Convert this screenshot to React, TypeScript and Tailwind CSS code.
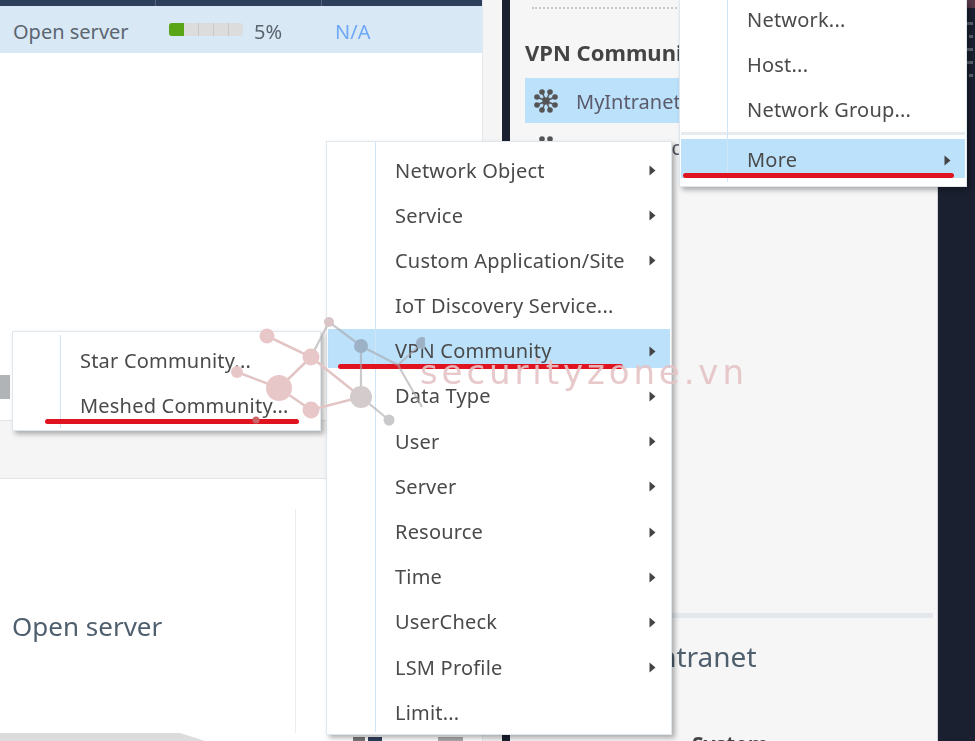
const font = "font-['Noto_Sans','Liberation_Sans',sans-serif]";

const mainItems = [
  { label: "Network Object", sub: true },
  { label: "Service", sub: true },
  { label: "Custom Application/Site", sub: true },
  { label: "IoT Discovery Service..." },
  { label: "VPN Community", sub: true, active: true },
  { label: "Data Type", sub: true },
  { label: "User", sub: true },
  { label: "Server", sub: true },
  { label: "Resource", sub: true },
  { label: "Time", sub: true },
  { label: "UserCheck", sub: true },
  { label: "LSM Profile", sub: true },
  { label: "Limit..." },
];

const Arrow = () => (
  <svg width="7" height="11" viewBox="0 0 7 11" className="ml-auto mr-[14px]">
    <polygon points="0.5,0.5 6.5,5.5 0.5,10.5" fill="#444" />
  </svg>
);

type RowProps = { label: string; sub?: boolean; active?: boolean; indent?: string; lift?: string };

const MenuRow = ({ label, sub, active, indent = "pl-[67px]", lift = "pt-[6px]" }: RowProps) => (
  <div className={`flex h-[39px] shrink-0 items-center text-[20px] tracking-[0.2px] text-[#4a4a4a] ${lift} ${indent} ${active ? "bg-[#bbe1fb]" : ""}`}>
    <span className="whitespace-nowrap">{label}</span>
    {sub && <Arrow />}
  </div>
);

const MeshIcon = ({ className }: { className: string }) => {
  const outer: [number, number][] = [
    [4, 9], [4, 17], [9, 4], [17, 4], [22, 9], [22, 17], [9, 22], [17, 22],
  ];
  return (
    <svg width="26" height="26" viewBox="0 0 26 26" className={className}>
      <rect x="9.5" y="9.5" width="7" height="7" fill="#555" />
      <path d="M9 4L13 13L17 4M4 9L13 13L4 17M22 9L13 13L22 17M9 22L13 13L17 22" stroke="#555" strokeWidth="1.4" fill="none" />
      {outer.map(([cx, cy]) => (
        <circle key={`${cx}-${cy}`} cx={cx} cy={cy} r="2.8" fill="#555" />
      ))}
    </svg>
  );
};

const Logo = () => (
  <svg width="200" height="120" viewBox="225 310 200 120" className="absolute left-[225px] top-[310px]">
    <g stroke="#e3c4c5" strokeWidth="2.5" fill="none">
      <path d="M267 336L311 357L279 388L237 372M279 388L311 410L361 397M311 357L361 397" />
    </g>
    <g stroke="#a9a5aa" strokeWidth="2.2" fill="none" opacity="0.6">
      <path d="M311 357L329 322L361 346L398 365L422 407M361 346V397L389 420M398 365L422 343" />
    </g>
    <g fill="#e8c7c9">
      <circle cx="267" cy="336" r="7.5" />
      <circle cx="311" cy="357" r="8.5" />
      <circle cx="237" cy="372" r="6" />
      <circle cx="279" cy="388" r="13" />
      <circle cx="311" cy="410" r="8.5" />
      <circle cx="256" cy="420" r="3.5" fill="#c9656a" />
    </g>
    <circle cx="329" cy="322" r="5" fill="#d9c5c7" />
    <circle cx="361" cy="346" r="7" fill="#9cb0c6" />
    <circle cx="361" cy="397" r="11" fill="#d4cbcd" />
    <circle cx="389" cy="420" r="5.5" fill="#c9c9cb" />
    <circle cx="422" cy="343" r="6" fill="#9cb0c6" />
  </svg>
);

const App = () => {
  return (
    <div className={`relative flex h-[741px] w-[975px] overflow-hidden bg-[#f6f6f6] ${font}`}>
      <div className="relative flex h-full w-full blur-[0.6px]">
        {/* left pane */}
        <div className="flex w-[482px] shrink-0 flex-col bg-white">
          <div className="flex h-[6px] shrink-0 bg-[#2d3f5a]">
            <div className="w-[156px] border-r border-[#56667d]" />
            <div className="w-[166px] border-r border-[#56667d]" />
          </div>
          <div className="flex h-[47px] shrink-0 items-center bg-[#d9e8f5] pt-[4px] text-[20px] text-[#5b6570]">
            <span className="ml-[13px] w-[156px]">Open server</span>
            <div className="flex h-[13px] w-[74px] overflow-hidden rounded-[3px] bg-[#dcdcdc] -mt-[4px]">
              <div className="w-[15px] bg-[#5aa516]" />
              <div className="w-[15px] border-r border-[#c8c8c8]" />
              <div className="w-[15px] border-r border-[#c8c8c8]" />
              <div className="w-[15px] border-r border-[#c8c8c8]" />
            </div>
            <span className="ml-[11px] w-[81px]">5%</span>
            <span className="text-[#6ea8f5]">N/A</span>
          </div>
          <div className="h-[322px] shrink-0 bg-white" />
          <div className="h-[24px] w-[10px] shrink-0 bg-[#b0b4b6]" />
          <div className="h-[21px] shrink-0 bg-white" />
          <div className="h-[59px] shrink-0 border-y border-[#e0e5ea] bg-[#f5f5f5]" />
          <div className="flex flex-1 flex-col bg-white">
            <div className="mt-[30px] flex flex-1">
              <div className="w-[296px] border-r border-[#e8edf2] pt-[98px] pl-[12px] text-[26px] leading-[38px] text-[#4f5f6e]">
                Open server
              </div>
            </div>
            <div className="h-[8px] w-[210px] bg-[#dcdcdc] [clip-path:polygon(0_0,180px_0,205px_100%,0_100%)]" />
          </div>
        </div>

        <div className="w-[20px] shrink-0 border-l border-[#e4e8ec] bg-[#f5f5f5]" />
        <div className="w-[8px] shrink-0 bg-[#1a2030]" />

        {/* right pane */}
        <div className="flex w-[427px] shrink-0 flex-col bg-[#f6f6f6] pl-[15px] pr-[4px]">
          <div className="mt-[7px] ml-[7px] w-[160px] shrink-0 border-t-2 border-dotted border-[#c9c9c9]" />
          <h2 className="mt-[29px] shrink-0 whitespace-nowrap text-[22px] font-bold leading-[28px] text-[#444]">VPN Communities</h2>
          <div className="mt-[12px] flex h-[45px] w-[155px] shrink-0 items-center overflow-hidden bg-[#bbe1fb] text-[20px] text-[#5b5b6b]">
            <MeshIcon className="ml-[8px] shrink-0" />
            <span className="ml-[17px] whitespace-nowrap pt-[2px]">MyIntranet</span>
          </div>
          <div className="mt-[2px] flex h-[45px] shrink-0 items-center text-[20px] text-[#5b5b6b]">
            <MeshIcon className="ml-[8px] shrink-0" />
            <span className="ml-[17px] whitespace-nowrap">RemoteAccess</span>
          </div>
          <div className="mt-[443px] h-[5px] shrink-0 bg-[#e4e8ec]" />
          <div className="mt-[19px] shrink-0 pl-[85px] text-[28px] leading-[38px] text-[#4f5f6e]">MyIntranet</div>
          <div className="mt-[55px] shrink-0 pl-[167px] text-[21px] leading-[28px] font-bold text-[#444]">System</div>
        </div>

        {/* dark rail */}
        <div className="flex flex-1 flex-col items-end gap-[10px] border-l border-[#cfd3d8] bg-[#1a2030] pt-[22px] pr-[2px]">
          <div className="h-[3px] w-[6px] bg-[#5c6472]" />
          <div className="h-[3px] w-[4px] bg-[#5c6472]" />
          <div className="h-[3px] w-[6px] bg-[#5c6472]" />
          <div className="h-[3px] w-[6px] bg-[#5c6472]" />
          <div className="h-[3px] w-[4px] bg-[#5c6472]" />
        </div>
      </div>

      <div className="absolute right-0 top-0 h-[8px] w-[8px] bg-[#5a3a4a] blur-[0.5px]" />
      <div className="absolute left-[353px] top-[737px] flex items-center gap-[3px] blur-[0.5px]">
        <div className="h-[4px] w-[12px] bg-[#777]" />
        <div className="h-[4px] w-[14px] bg-[#2d3f5a]" />
        <div className="ml-[53px] h-[4px] w-[25px] bg-[#aaa]" />
      </div>

      {/* context menus */}
      <div className="absolute left-[326px] top-[141px] flex h-[594px] w-[346px] flex-col gap-[6.2px] border border-[#dfe6ec] bg-white p-[1px] pt-[6px] shadow-[3px_3px_5px_rgba(0,0,0,0.3)] blur-[0.6px]">
        <div className="absolute bottom-[2px] left-[48px] top-0 z-10 w-px bg-[#cfe4f6]" />
        {mainItems.map((item) => (
          <MenuRow key={item.label} {...item} />
        ))}
        <div className="absolute left-[11px] top-[222px] z-20 h-[5px] w-[285px] rounded-full bg-[#e01420]" />
      </div>

      <div className="absolute left-[679px] top-0 flex h-[187px] w-[288px] flex-col border border-t-0 border-[#dfe6ec] bg-white p-[1px] pt-0 shadow-[3px_3px_5px_rgba(0,0,0,0.3)] blur-[0.6px]">
        <div className="absolute bottom-[4px] left-[47px] top-0 z-10 w-px bg-[#cfe4f6]" />
        <div className="-mt-[3px]"><MenuRow label="Network..." indent="pl-[66px]" /></div>
        <div className="mt-[6px]"><MenuRow label="Host..." indent="pl-[66px]" /></div>
        <div className="mt-[6px]"><MenuRow label="Network Group..." indent="pl-[66px]" /></div>
        <div className="mt-[6px] h-[3px] shrink-0 bg-[#e6ebf0]" />
        <div className="mt-[4px]"><MenuRow label="More" sub active indent="pl-[66px]" lift="pt-[3px]" /></div>
        <div className="absolute left-[3px] top-[173px] z-20 h-[5px] w-[271px] rounded-full bg-[#e01420]" />
      </div>

      <div className="absolute left-[12px] top-[331px] flex h-[100px] w-[309px] flex-col gap-[6px] border border-[#dfe6ec] bg-white p-[1px] pt-[6px] shadow-[3px_3px_5px_rgba(0,0,0,0.3)] blur-[0.6px]">
        <div className="absolute bottom-[2px] left-[47px] top-[3px] z-10 w-px bg-[#cfe4f6]" />
        <MenuRow label="Star Community..." indent="pl-[66px]" />
        <MenuRow label="Meshed Community..." indent="pl-[66px]" />
        <div className="absolute left-[32px] top-[87px] z-20 h-[5px] w-[254px] rounded-full bg-[#e01420]" />
      </div>

      {/* watermark */}
      <div className="absolute inset-0 blur-[0.4px]">
        <Logo />
        <span className="absolute left-[420px] top-[352px] whitespace-nowrap font-['DejaVu_Sans',sans-serif] text-[34px] leading-[40px] tracking-[3.9px] text-[#e6c3c5]/90">
          securityzone.vn
        </span>
      </div>
    </div>
  );
};

export default App;
